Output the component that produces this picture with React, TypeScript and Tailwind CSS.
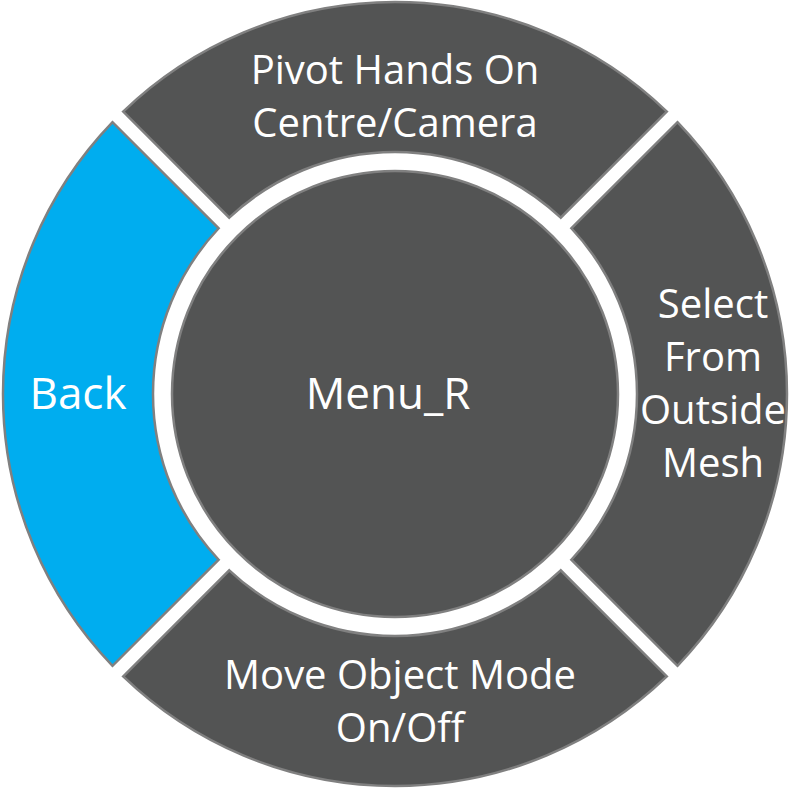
import React from "react";

const CX = 395;
const CY = 394;
const R_OUT = 392;
const R_IN = 242;
const HALF_GAP = 7.5;

// top wedge of the ring, the other three are this one rotated
function wedgePath() {
  const s = Math.SQRT1_2;
  const tR = Math.sqrt(R_OUT * R_OUT - HALF_GAP * HALF_GAP);
  const tr = Math.sqrt(R_IN * R_IN - HALF_GAP * HALF_GAP);
  const d = HALF_GAP;
  const ax = CX + s * (d - tR), ay = CY - s * (d + tR);
  const bx = CX + s * (tR - d), by = ay;
  const cx = CX + s * (tr - d), cy = CY - s * (d + tr);
  const dx = CX + s * (d - tr), dy = cy;
  return `M ${ax} ${ay} A ${R_OUT} ${R_OUT} 0 0 1 ${bx} ${by} L ${cx} ${cy} A ${R_IN} ${R_IN} 0 0 0 ${dx} ${dy} Z`;
}

const wedges = [
  { rot: 0, fill: "#535454" },
  { rot: 90, fill: "#535454" },
  { rot: 180, fill: "#535454" },
  { rot: 270, fill: "#00adef" },
];

export default function App() {
  const d = wedgePath();
  return (
    <div className="relative w-[790px] h-[789px] bg-white overflow-hidden font-['Open_Sans',sans-serif] text-white text-[40px] leading-[53px]">
      <svg width="790" height="789" className="absolute inset-0">
        {wedges.map((w) => (
          <path
            key={w.rot}
            d={d}
            fill={w.fill}
            stroke="#808080"
            strokeWidth="2.5"
            transform={`rotate(${w.rot} ${CX} ${CY})`}
          />
        ))}
        <circle cx={CX} cy={CY} r="223" fill="#535454" stroke="#808080" strokeWidth="2.5" />
      </svg>

      <div className="absolute left-[195px] top-[42px] w-[400px] text-center">
        Pivot Hands On
        <br />
        Centre/Camera
      </div>
      <div className="absolute left-[613px] top-[276px] w-[200px] text-center">
        Select
        <br />
        From
        <br />
        Outside
        <br />
        Mesh
      </div>
      <div className="absolute left-[0px] top-[366px] w-[156px] text-center text-[44px]">Back</div>
      <div className="absolute left-[238px] top-[366px] w-[300px] text-center text-[44px]">Menu_R</div>
      <div className="absolute left-[200px] top-[647px] w-[400px] text-center">
        Move Object Mode
        <br />
        On/Off
      </div>
    </div>
  );
}
